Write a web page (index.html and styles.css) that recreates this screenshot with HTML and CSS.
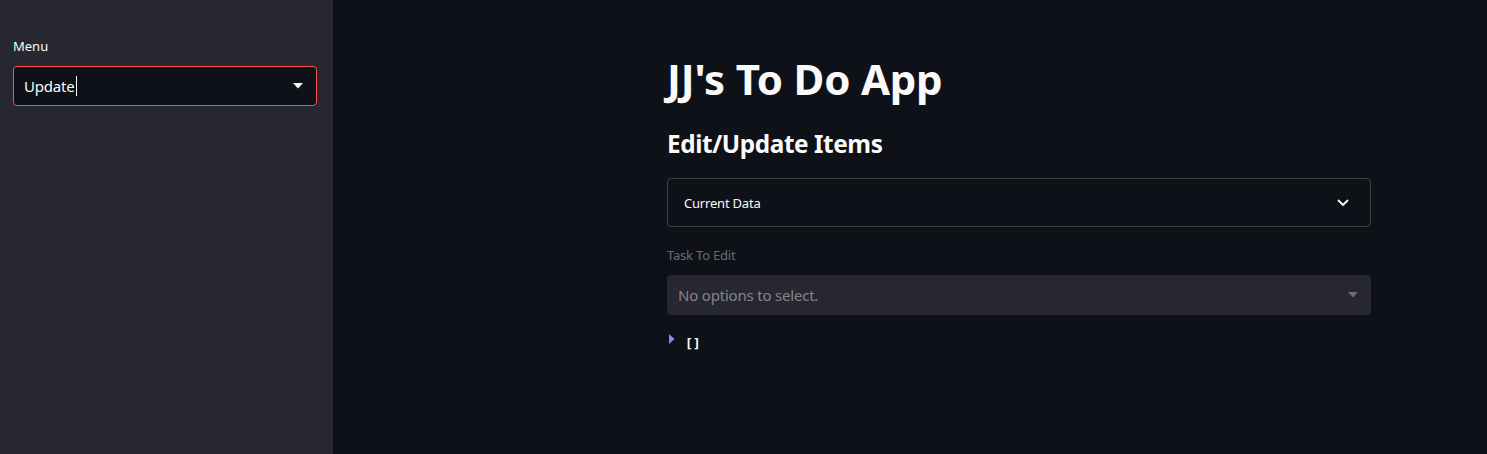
FILE: index.html
```html
<!DOCTYPE html>
<html>
<head>
<meta charset="utf-8">
<link rel="stylesheet" href="styles.css">
</head>
<body>
<div class="app">
  <aside class="sidebar">
    <div class="label">Menu</div>
    <div class="select focused">
      <span class="value">Update</span><span class="caret"></span>
      <svg class="arrow" width="10" height="6" viewBox="0 0 10 6"><path d="M0 0h10L5 5.5z" fill="#fafafa"/></svg>
    </div>
  </aside>
  <main class="main">
    <div class="block">
      <h1 class="title">JJ's To Do App</h1>
      <h2 class="subtitle">Edit/Update Items</h2>
      <div class="expander">
        <span>Current Data</span>
        <svg width="12" height="8" viewBox="0 0 12 8"><path d="M1.5 1.5L6 6l4.5-4.5" fill="none" stroke="#fafafa" stroke-width="1.8" stroke-linecap="round" stroke-linejoin="round"/></svg>
      </div>
      <div class="field-label disabled">Task To Edit</div>
      <div class="select disabled-select">
        <span class="placeholder">No options to select.</span>
        <svg class="arrow" width="10" height="6" viewBox="0 0 10 6"><path d="M0 0h10L5 5.5z" fill="#6b6d76"/></svg>
      </div>
      <div class="json">
        <svg width="6" height="10" viewBox="0 0 6 10"><path d="M0 0v10l5.5-5z" fill="#a37bf7"/></svg>
        <span class="bracket">[]</span>
      </div>
    </div>
  </main>
</div>
</body>
</html>
```

FILE: styles.css
```css
* { box-sizing: border-box; }
html, body { margin: 0; padding: 0; height: 100%; }
body {
  background: #0e1117;
  color: #fafafa;
  font-family: "Noto Sans", "Open Sans", sans-serif;
}
.app { display: flex; height: 454px; }
.sidebar {
  width: 333px;
  flex: none;
  background: #262730;
  padding: 38px 16px 0 13px;
}
.label {
  font-size: 13px;
  line-height: 16px;
  color: #fafafa;
  margin-bottom: 12px;
}
.select {
  height: 40px;
  border-radius: 4px;
  display: flex;
  align-items: center;
  padding: 0 13px 0 10px;
  position: relative;
}
.select.focused {
  background: #0e1117;
  border: 1px solid #ff4b4b;
}
.value { font-size: 15px; color: #fafafa; letter-spacing: -0.2px; }
.caret { display: inline-block; width: 1px; height: 20px; background: #fafafa; margin-left: 1px; }
.arrow { margin-left: auto; }
.main { flex: 1; display: flex; }
.block {
  width: 704px;
  margin-left: 334px;
  padding-top: 56px;
}
.title {
  margin: 0;
  font-size: 42px;
  line-height: 46px;
  font-weight: 700;
  letter-spacing: -0.2px;
}
.subtitle {
  margin: 26px 0 0 0;
  font-size: 24.3px;
  line-height: 32px;
  font-weight: 700;
  letter-spacing: -0.4px;
}
.expander {
  margin-top: 18px;
  height: 49px;
  border: 1px solid rgba(250,250,250,0.2);
  border-radius: 4px;
  display: flex;
  align-items: center;
  justify-content: space-between;
  padding: 0 21px 0 16px;
  font-size: 13px;
  letter-spacing: -0.2px;
}
.field-label {
  margin-top: 20px;
  font-size: 13px;
  line-height: 16px;
  letter-spacing: -0.2px;
}
.field-label.disabled { color: rgba(250,250,250,0.4); }
.disabled-select {
  margin-top: 12px;
  background: #262730;
  padding: 0 13px 0 11px;
}
.placeholder { font-size: 15px; color: rgba(250,250,250,0.45); letter-spacing: -0.2px; }
.json {
  display: flex;
  align-items: flex-start;
  margin-top: 18px;
  padding-left: 2px;
}
.json svg { margin-top: 1px; }
.bracket {
  font-family: "DejaVu Sans Mono", monospace;
  font-weight: 700;
  font-size: 13px;
  margin-left: 10px;
  margin-top: 3px;
}
```
